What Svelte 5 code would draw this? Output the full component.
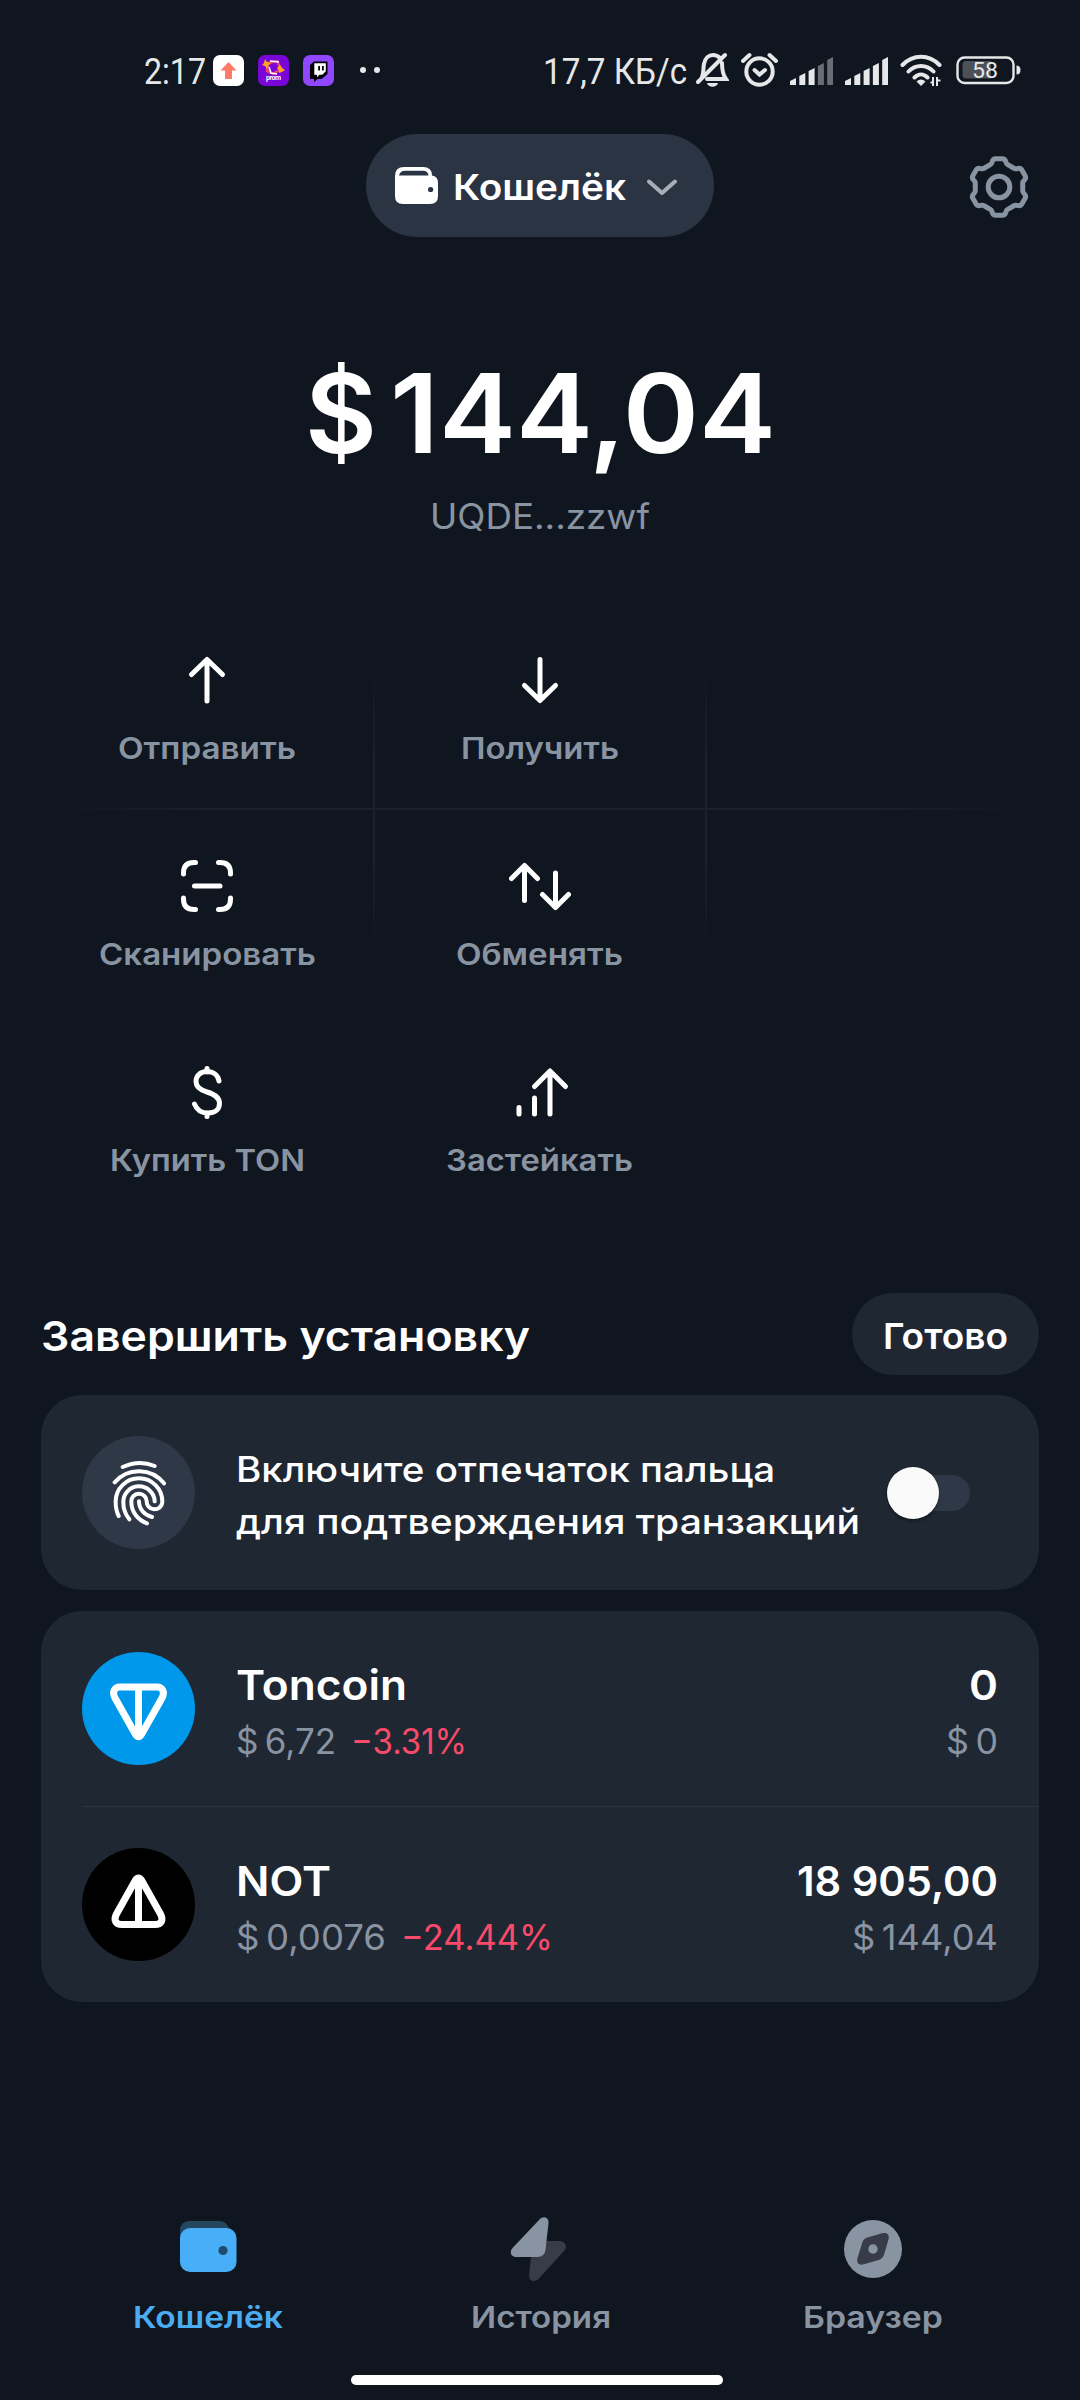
<script>
  const actions = [
    { icon: 'send', text: 'Отправить', width: 178 },
    { icon: 'receive', text: 'Получить', width: 158 },
    null,
    { icon: 'scan', text: 'Сканировать', width: 217 },
    { icon: 'swap', text: 'Обменять', width: 167 },
    null,
    { icon: 'buy', text: 'Купить TON', width: 195 },
    { icon: 'stake', text: 'Застейкать', width: 187 },
    null
  ];

  const tokens = [
    {
      id: 'ton',
      name: ['Toncoin', 171],
      price: ['$\u20096,72', 100],
      diff: ['−3.31%', 116],
      amount: ['0', 29],
      value: ['$\u20090', 52]
    },
    {
      id: 'not',
      name: ['NOT', 95],
      price: ['$\u20090,0076', 150],
      diff: ['−24.44%', 152],
      amount: ['18 905,00', 201],
      value: ['$\u2009144,04', 146]
    }
  ];

  const tabs = [
    { id: 'wallet', text: 'Кошелёк', width: 150 },
    { id: 'history', text: 'История', width: 140 },
    { id: 'browser', text: 'Браузер', width: 140 }
  ];

  // One gear tooth around the origin, repeated six times to form the outline.
  const tooth = [
    ['', -8.8, -22.3], ['Q', -7.3, -23], ['', -6.9, -25], ['Q', -6.2, -28.3], ['', -3, -28.3],
    ['L', 3, -28.3], ['Q', 6.2, -28.3], ['', 6.9, -25], ['Q', 7.3, -23], ['', 8.8, -22.3]
  ];
  const gear = Array.from({ length: 6 }, (_, i) => {
    const c = Math.cos((i * Math.PI) / 3);
    const s = Math.sin((i * Math.PI) / 3);
    return tooth
      .map(([cmd, x, y], j) => {
        const op = j === 0 ? (i === 0 ? 'M' : 'L') : cmd;
        return `${op}${(x * c - y * s).toFixed(2)} ${(x * s + y * c).toFixed(2)}`;
      })
      .join(' ');
  }).join('') + 'Z';

  const bars = [8, 13, 18, 23, 29];
</script>

{#snippet label(text, width, size)}
  <svg class="label" {width} height={Math.round(size * 0.727)}>
    <text x="0" y={Math.round(size * 0.727)} font-size={size} textLength={width} lengthAdjust="spacingAndGlyphs">{text}</text>
  </svg>
{/snippet}

{#snippet signal(active)}
  <svg class="signal" width="43" height="31" viewBox="0 0 43 31">
    {#each bars as h, i}
      <path class:dim={i >= active} d="M{i * 9.3} {31 - h + 3}l6-3V30h-6z" />
    {/each}
  </svg>
{/snippet}

<div class="screen">
  <div class="status">
    <span class="clock">{@render label('2:17', 62, 37)}</span>
    <svg class="app" width="31" height="31" viewBox="0 0 31 31">
      <rect width="31" height="31" rx="7" fill="#fff" />
      <path d="M15.5 7L23.5 15.5H19V24H12V15.5H7.5Z" fill="#ff7a66" />
    </svg>
    <svg class="app next" width="31" height="31" viewBox="0 0 31 31">
      <rect width="31" height="31" rx="7" fill="#7a05d8" />
      <path d="M10 8l9-2 4 8-8 5-6-3z" fill="none" stroke="#f4436d" stroke-width="2.4" />
      <path d="M12 6l9 1M11 12l2 6 6 1" fill="none" stroke="#fff" stroke-width="1.6" />
      <path d="M7 4l2 3 4 1-3 3-1 3-2-3-3-1 2-2zM22 10l2 3 3 2-3 2-3 1 0-3-2-2z" fill="#ffa51f" />
      <text x="8" y="25" font-size="7" font-weight="700" fill="#fff" textLength="15">prom</text>
    </svg>
    <svg class="app next" width="31" height="31" viewBox="0 0 31 31">
      <rect width="31" height="31" rx="7" fill="#9147ff" />
      <path d="M7 10l4-3.5h13.5V19l-6 5h-4l-3.500 3v-3H7z" fill="#000" />
      <path d="M11.300 8.300h11.500v8l-3.500 3.500h-3l-2.300 2.500v-2.500h-2.700z" fill="#fff" />
      <path d="M15.200 11h1.800v4.500h-1.800zM19 11h1.800v4.500H19z" fill="#000" />
    </svg>
    <svg class="dots" width="20" height="6" viewBox="0 0 20 6"><circle cx="3" cy="3" r="3" /><circle cx="17" cy="3" r="3" /></svg>

    <span class="speed">{@render label('17,7 КБ/с', 144, 37)}</span>
    <svg class="line bell" width="33" height="36" viewBox="0 0 33 36">
      <path d="M6 25C8 21 7 16 8 12C9 6 13 3 17 3C20 3 22 4 24 6M26 11C26 18 27 23 30 27H11M2 30L29 3" />
      <path class="solid" d="M11 31h11c-1 5-10 5-11 0z" />
    </svg>
    <svg class="line alarm" width="37" height="36" viewBox="0 0 37 36">
      <circle cx="18.500" cy="19.500" r="13.200" />
      <path d="M2 9L8.500 3M35 9L28.500 3M13.500 18l5 4.500 5.500-4.500" />
    </svg>
    <span class="sig">{@render signal(3)}</span>
    <span class="sig">{@render signal(5)}</span>
    <svg class="line wifi" width="43" height="34" viewBox="0 0 43 34">
      <path d="M2.500 12C13 1 29 1 39.500 12M8.500 18.500C15.500 11 26.500 11 33.500 18.500M14.500 24.500C18.500 20.500 23.500 20.500 27.500 24.500" />
      <path class="solid" d="M16.500 28.500q4.500-4 9 0l-4.500 4.500z" />
      <path class="thin" d="M33 24v9M37 24v9M30.500 29.500h2.500M37 27.500h3.500" />
    </svg>
    <svg class="battery" width="64" height="28" viewBox="0 0 64 28">
      <rect x="1.500" y="1.500" width="56" height="25.500" rx="7" fill="none" stroke="#e6e7e8" stroke-width="2.400" />
      <path d="M10 5H35V22.500H10Q6.500 22.500 6.500 18.500V9Q6.500 5 10 5Z" fill="#4d5157" />
      <path d="M60.500 9.500q4 0 4 4.500t-4 4.500z" fill="#e6e7e8" />
      <text x="16" y="22" font-size="21.500" fill="#e6e7e8" textLength="26" lengthAdjust="spacingAndGlyphs">58</text>
    </svg>
  </div>

  <header class="top">
    <button class="switcher">
      <svg width="43" height="37" viewBox="0 0 43 37">
        <path d="M9 0H28Q37 0 37 8.500Q43 9 43 16V29Q43 37 35 37H8Q0 37 0 29V9Q0 0 9 0Z" fill="#fff" />
        <path d="M4 8.500Q5 3.700 10 3.700H28Q33 3.700 33.500 8.500Z" fill="#2b3442" />
        <circle cx="35.600" cy="22.500" r="2.600" fill="#2b3442" />
      </svg>
      <span class="semi">{@render label('Кошелёк', 173, 36)}</span>
      <svg class="chevron" width="30" height="17" viewBox="0 0 30 17"><path d="M2 2.500L15 14L28 2.500" /></svg>
    </button>
    <svg class="gear" width="64" height="64" viewBox="-32 -32 64 64">
      <path d={gear} />
      <circle r="10.800" />
    </svg>
  </header>

  <section class="balance">
    <div class="semi total">{@render label('$', 72, 110)}{@render label('144,04', 386, 110)}</div>
    <div class="muted">{@render label('UQDE...zzwf', 220, 35)}</div>
  </section>

  <section class="actions">
    {#each actions as a}
      <div class="action">
        {#if a}
          <svg class="glyph" width="62" height="62" viewBox="0 0 62 62">
            {#if a.icon === 'send'}
              <path d="M31 52V11M15.500 25.500L31 10.500L46.500 25.500" />
            {:else if a.icon === 'receive'}
              <path d="M31 10.500V51M15.500 36.500L31 51.500L46.500 36.500" />
            {:else if a.icon === 'scan'}
              <path d="M7.500 19V18Q7.500 7.500 18 7.500H19.500M42.500 7.500H44Q54.500 7.500 54.500 18V19M54.500 43V44Q54.500 54.500 44 54.500H42.500M19.500 54.500H18Q7.500 54.500 7.500 44V43M18.500 31H44" />
            {:else if a.icon === 'swap'}
              <path d="M15.500 45.500V11M2.500 23.500L15.500 10.500L28.500 23.500M46.500 18V52M33.500 39.500L46.500 52.500L59.500 39.500" />
            {:else if a.icon === 'buy'}
              <path d="M43 20C42 14 37 10.500 31 10.500C24 10.500 20 15 20 20.500C20 26 24 29 31 31C38 33 43.500 36 43.500 42.500C43.500 48.500 38.500 52 32 52C25 52 20.500 48.500 18.500 43M31 7.500V11M31 52V55.500" />
            {:else}
              <path d="M10 46.500V53M25.500 37V53M41 53V11M25.500 25.500L41 10L56.500 25.500" />
            {/if}
          </svg>
          <div class="semi muted">{@render label(a.text, a.width, 30)}</div>
        {/if}
      </div>
    {/each}
  </section>

  <div class="section-head">
    <div class="semi title">{@render label('Завершить установку', 489, 41)}</div>
    <button class="done semi">{@render label('Готово', 125, 36)}</button>
  </div>

  <section class="card setup">
    <div class="badge">
      <svg class="finger" width="66" height="66" viewBox="256 540 198 198">
        <path d="M306 561Q355 538 402 558M282 607A96 96 0 0 1 430 610M294 708Q285 690 285 665A70 70 0 0 1 425 665V666A23.500 23.500 0 0 1 378 663A23 23 0 0 0 332 665C332 697 352 720 379 730M326 718Q308 695 308 668A47 47 0 0 1 402 664M355 664C355 688 372 706 394 711" />
      </svg>
    </div>
    <div class="med lines">
      {@render label('Включите отпечаток пальца', 539, 35)}
      {@render label('для подтверждения транзакций', 624, 35)}
    </div>
    <div class="toggle"><i></i></div>
  </section>

  <section class="card tokens">
    {#each tokens as t}
      <div class="token">
        <div class="badge {t.id}">
          <svg width="113" height="113" viewBox="0 0 113 113">
            {#if t.id === 'ton'}
              <path d="M38 35H75C81 35 83 40.500 80 46L60 81.500Q56.500 88 53 81.500L33 46C30 40.500 32 35 38 35ZM56.500 35V83" />
            {:else}
              <path d="M53.300 32.500Q56.500 27.500 59.700 32.500L78.500 66C82 72.500 79 76.500 73 76.500H40C34 76.500 31 72.500 34.500 66ZM56.500 31V76" />
            {/if}
          </svg>
        </div>
        <div class="info">
          <div class="semi">{@render label(t.name[0], t.name[1], 41)}</div>
          <div class="sub">
            <span class="muted">{@render label(t.price[0], t.price[1], 35)}</span>
            <span class="red">{@render label(t.diff[0], t.diff[1], 35)}</span>
          </div>
        </div>
        <div class="info right">
          <div class="semi">{@render label(t.amount[0], t.amount[1], 41)}</div>
          <div class="muted">{@render label(t.value[0], t.value[1], 35)}</div>
        </div>
      </div>
    {/each}
  </section>

  <nav class="tabs">
    {#each tabs as tab, i}
      <div class="tab" class:active={i === 0}>
        <svg width="64" height="64" viewBox="0 0 64 64">
          {#if tab.id === 'wallet'}
            <path d="M3 24V14Q3 4 13 4H42Q50 4 52 12V24Z" fill="#25465f" />
            <rect x="3" y="11" width="56.500" height="44" rx="10" fill="#47aef7" />
            <circle cx="46" cy="33.500" r="4.600" fill="#1f4c6e" />
          {:else if tab.id === 'history'}
            <path d="M36 24H50C57 24 59 30 54.500 34.500L29.500 62C25 66 19.500 63.500 20 58L22.500 36Z" fill="#373c48" />
            <path d="M30.500 2.500C34-1.500 40 0 39.500 6L36.500 33Q35.500 40 28.500 40H8C1.500 40 0 34.500 4 30.500Z" fill="#8994a3" />
          {:else}
            <circle cx="32" cy="32" r="29" fill="#8994a3" />
            <path d="M25.500 20.800L41 16.300C46 15 48.800 17.500 47.500 22.500L43.200 37Q42 41.200 38.500 42.700L23 47.300C18 48.800 15.300 46 16.500 41L21 26.500Q22 22.300 25.500 20.800Z" fill="#373c48" />
            <circle cx="32" cy="32" r="4.700" fill="#8994a3" />
          {/if}
        </svg>
        <div class="semi">{@render label(tab.text, tab.width, 30)}</div>
      </div>
    {/each}
  </nav>
  <div class="home"></div>
</div>

<style>
  :global(body) { background: #10161f; }
  .screen {
    width: 1080px; height: 2400px; overflow: hidden; box-sizing: border-box;
    background: #10161f; color: #fff; font-family: Inter, "Noto Sans", sans-serif;
    display: flex; flex-direction: column;
  }
  svg { display: block; flex: none; }
  button { border: 0; padding: 0; margin: 0; color: inherit; font: inherit; }
  .label { overflow: visible; }
  .label text { fill: currentColor; }
  .semi, button.semi { font-weight: 600; }
  .med { font-weight: 500; }
  .muted { color: #8994a3; }
  .red { color: #fa4a69; }

  .status {
    height: 134px; box-sizing: border-box; padding: 6px 60px 0 144px; flex: none;
    display: flex; align-items: center; color: #e6e7e8; font-family: Roboto, sans-serif; font-weight: 400;
  }
  .clock { width: 69px; }
  .next { margin-left: 14px; }
  .dots { margin-left: 26px; fill: #e6e7e8; }
  .speed { margin-left: auto; }
  .line { fill: none; stroke: #e6e7e8; stroke-width: 4; stroke-linecap: round; }
  .line .solid { fill: #e6e7e8; stroke: none; }
  .line .thin { stroke-width: 2; stroke-linecap: butt; }
  .bell { margin-left: 9px; }
  .alarm { margin-left: 12px; }
  .sig { margin-left: 12px; }
  .signal { fill: #e6e7e8; }
  .dim { fill: #6a6d73; }
  .wifi { margin-left: 12px; }
  .battery { margin-left: 13px; overflow: visible; }

  .top { display: grid; grid-template-columns: 1fr auto 1fr; align-items: center; height: 103px; flex: none; }
  .switcher {
    grid-column: 2; width: 348px; height: 103px; border-radius: 51px; background: #2b3442;
    display: flex; align-items: center; padding-left: 29px; box-sizing: border-box;
  }
  .switcher .semi { margin: 3px 0 0 15px; }
  .chevron { margin: 4px 0 0 21px; fill: none; stroke: #a9aeb6; stroke-width: 4; stroke-linecap: round; stroke-linejoin: round; }
  .gear { justify-self: end; margin: 2px 49px 0 0; fill: none; stroke: #8994a3; stroke-width: 5; stroke-linejoin: round; }

  .balance { display: flex; flex-direction: column; align-items: center; padding-top: 136px; gap: 51px; flex: none; }
  .total { display: flex; gap: 13px; }

  .actions {
    position: relative; display: grid; grid-template-columns: repeat(3, 1fr); grid-auto-rows: 206px;
    margin: 74px 41px 0; flex: none;
  }
  .actions::before, .actions::after { content: ""; position: absolute; box-sizing: border-box; }
  .actions::before {
    left: 20px; right: 20px; top: 205px; height: 2px;
    background: linear-gradient(90deg, transparent, #1b212c 15%, #1b212c 85%, transparent);
  }
  .actions::after {
    left: 332px; width: 334px; top: 60px; height: 290px; border: solid #1b212c; border-width: 0 2px;
    mask-image: linear-gradient(transparent, #000 30%, #000 70%, transparent);
  }
  .action {
    display: flex; flex-direction: column; align-items: center; gap: 26px;
    width: 288px; margin-left: 22px; padding-top: 46px;
  }
  .glyph { fill: none; stroke: #fff; stroke-width: 5; stroke-linecap: round; stroke-linejoin: round; }

  .section-head { display: flex; align-items: center; justify-content: space-between; margin: 72px 41px 20px; height: 82px; flex: none; }
  .title { padding-top: 4px; }
  .done {
    width: 187px; height: 82px; border-radius: 41px; background: #1e2732; box-sizing: border-box;
    display: flex; align-items: center; justify-content: center; padding-top: 4px;
  }

  .card { margin: 0 41px; border-radius: 41px; background: #1e2732; flex: none; }
  .setup { height: 195px; box-sizing: border-box; display: flex; align-items: center; padding: 0 69px 0 41px; margin-bottom: 21px; }
  .badge { width: 113px; height: 113px; border-radius: 50%; background: #2f3846; display: flex; align-items: center; justify-content: center; flex: none; }
  .finger { fill: none; stroke: #fff; stroke-width: 12; stroke-linecap: round; }
  .lines { display: flex; flex-direction: column; gap: 27px; margin-left: 41px; padding-top: 5px; }
  .toggle { position: relative; width: 83px; height: 52px; margin-left: auto; display: flex; align-items: center; }
  .toggle::before { content: ""; margin-left: 10px; width: 73px; height: 36px; border-radius: 18px; background: #2f3846; }
  .toggle i { position: absolute; left: 0; top: 0; width: 52px; height: 52px; border-radius: 50%; background: #fafafa; box-shadow: 0 2px 3px #0006; }

  .token { height: 195px; display: flex; align-items: center; margin-left: 41px; padding-right: 41px; }
  .token + .token { border-top: 1px solid #2b3542; }
  .badge.ton { background: #0098ea; }
  .badge.not { background: #000; }
  .badge.ton path, .badge.not path { fill: none; stroke: #fff; stroke-width: 7; stroke-linejoin: round; }
  .info { display: flex; flex-direction: column; gap: 29px; margin-left: 41px; padding-top: 6px; }
  .right { align-items: flex-end; margin-left: auto; }
  .sub { display: flex; gap: 15px; }

  .tabs { display: grid; grid-template-columns: repeat(3, 332px); justify-content: center; margin: 215px 0 0 2px; flex: none; }
  .tab { display: flex; flex-direction: column; align-items: center; gap: 25px; color: #8994a3; }
  .tab.active { color: #4cacf2; }
  .tab.active .semi { margin-left: -2px; }
  .home { width: 372px; height: 10px; border-radius: 5px; background: #fff; margin: 47px 0 0 351px; flex: none; }
</style>
